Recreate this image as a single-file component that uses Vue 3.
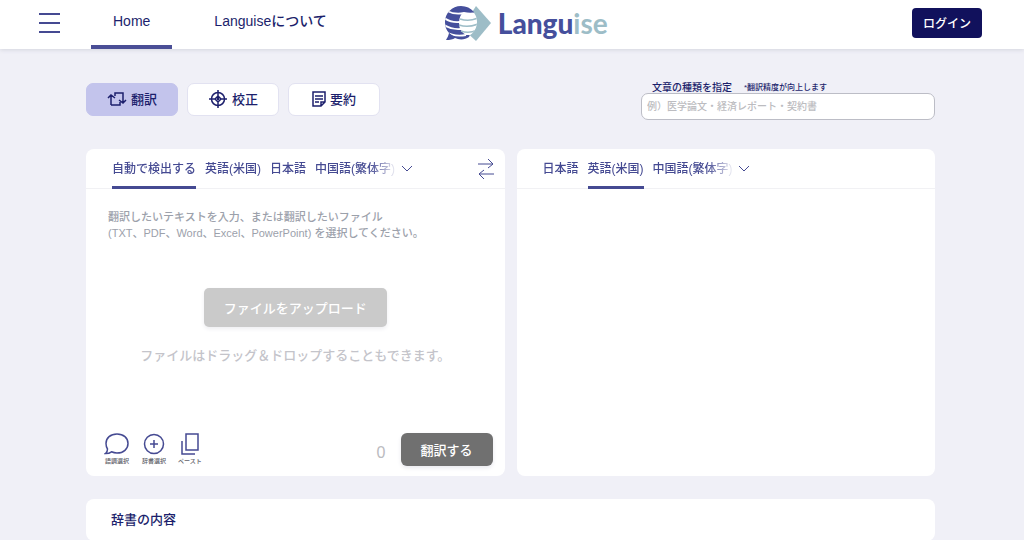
<script setup>
import { ref } from 'vue'

const modes = [
  { id: 'translate', label: '翻訳' },
  { id: 'proofread', label: '校正' },
  { id: 'summary', label: '要約' },
]
const mode = ref('translate')
const sourceLangs = ['自動で検出する', '英語(米国)', '日本語', '中国語(繁体字)']
const targetLangs = ['日本語', '英語(米国)', '中国語(繁体字)']
const source = ref('自動で検出する')
const target = ref('英語(米国)')
const text = ref('')
const genre = ref('')
</script>

<template>
  <div class="page">
    <header class="header">
      <button class="menu" type="button" aria-label="メニュー"><span></span><span></span><span></span></button>
      <nav class="nav">
        <a href="#" class="active">Home</a>
        <a href="#about">Languiseについて</a>
      </nav>
      <a class="logo" href="#" aria-label="Languise">
        <svg width="48" height="38" viewBox="0 0 48 38" aria-hidden="true">
          <defs>
            <clipPath id="globe"><circle cx="17" cy="18" r="16" /></clipPath>
          </defs>
          <path d="M32 2 47 19 32 37 18 24Z" fill="#9dbdc7" />
          <path d="M17 2C8 2 1 9 1 18c0 4 1 8 4 11-.5 3-2 5-3 7 4 0 7-.5 9-2 4 2 10 2 14-1L30 20V8Q25 2 17 2Z" fill="#454f9c" />
          <g clip-path="url(#globe)">
            <path d="M20 8q8 2 15-1v24H22q-7-4-7-12t5-11Z" fill="#fff" />
            <path d="M16 15q9 3 18-1M15 21q9 3 19-1M17 27q8 3 16-1" fill="none" stroke="#9dbdc7" stroke-width="1.500" />
            <path d="M3 7q8 4 17 2M0 14q7 5 16 4M0 21q8 5 17 4M2 28q8 5 20 3" fill="none" stroke="#fff" stroke-width="1.800" />
          </g>
        </svg>
        <span class="wordmark">Langu<span>ise</span></span>
      </a>
      <button class="login" type="button">ログイン</button>
    </header>

    <main class="main">
      <div class="toolbar">
        <div class="modes">
          <button v-for="m in modes" :key="m.id" type="button" :class="{ on: mode === m.id }" @click="mode = m.id">
            <svg v-if="m.id === 'translate'" width="20" height="16" viewBox="0 0 20 16"><path d="M4 14V4M1 7l3-3 4 3M4 14h9v-3M8 5V2h8v10M12 9l4 3 3-3" /></svg>
            <svg v-else-if="m.id === 'proofread'" width="20" height="20" viewBox="0 0 20 20"><circle cx="10" cy="10" r="6.500" /><path d="M10 1v6M10 13v6M1 10h6M13 10h6M10 7l3 3-3 3-3-3Z" /><circle cx="10" cy="10" r=".6" /></svg>
            <svg v-else width="14" height="16" viewBox="0 0 14 16"><path d="M1 1h12v10l-4 4H1ZM9 15v-4h4M3 5h8M3 8h8M3 11h4" /></svg>
            <span>{{ m.label }}</span>
          </button>
        </div>
        <div class="genre">
          <label for="genre">文章の種類を指定<small>*翻訳精度が向上します</small></label>
          <input id="genre" v-model="genre" type="text" placeholder="例）医学論文・経済レポート・契約書" />
        </div>
      </div>

      <div class="panels">
        <section class="panel">
          <div class="langs">
            <div class="tabs">
              <button v-for="l in sourceLangs" :key="l" type="button" :class="{ on: source === l }" @click="source = l">{{ l }}</button>
            </div>
            <button class="more" type="button" aria-label="他の言語"><svg width="12" height="8" viewBox="0 0 12 8"><path d="m1 1 5 5 5-5" /></svg></button>
            <button class="swap" type="button" aria-label="言語を入れ替える"><svg width="18" height="22" viewBox="0 0 18 22"><path d="M1 6h15M11 1l5 5M16 6l-5 4M17 16H2M7 12l-5 4M2 16l5 5" /></svg></button>
          </div>
          <textarea v-model="text" rows="2" aria-label="原文" placeholder="翻訳したいテキストを入力、または翻訳したいファイル&#10;(TXT、PDF、Word、Excel、PowerPoint) を選択してください。"></textarea>
          <div class="drop">
            <button type="button">ファイルをアップロード</button>
            <p>ファイルはドラッグ＆ドロップすることもできます。</p>
          </div>
          <div class="actions">
            <button class="tool" type="button">
              <svg width="26" height="24" viewBox="0 0 26 24"><path d="M13 2c6.500 0 11 4 11 9.500S19.500 21 13 21c-2 0-4-.5-5.500-1.200C6 21 4 21.500 1.500 21.500 3 20.500 3.500 19 3.500 17 2.500 15.500 2 13.500 2 11.500 2 6 6.500 2 13 2Z" /></svg>
              <span>語調選択</span>
            </button>
            <button class="tool" type="button">
              <svg width="24" height="24" viewBox="0 0 24 24"><circle cx="12" cy="12" r="9.500" /><path d="M12 8v8M8 12h8" /></svg>
              <span>辞書選択</span>
            </button>
            <button class="tool" type="button">
              <svg width="20" height="24" viewBox="0 0 20 24"><path d="M6 2h12v16H6ZM2 9v13h13" /></svg>
              <span>ペースト</span>
            </button>
            <output class="count">{{ text.length }}</output>
            <button class="submit" type="button">翻訳する</button>
          </div>
        </section>

        <section class="panel">
          <div class="langs target">
            <div class="tabs">
              <button v-for="l in targetLangs" :key="l" type="button" :class="{ on: target === l }" @click="target = l">{{ l }}</button>
            </div>
            <button class="more" type="button" aria-label="他の言語"><svg width="12" height="8" viewBox="0 0 12 8"><path d="m1 1 5 5 5-5" /></svg></button>
          </div>
        </section>
      </div>

      <section class="panel dictionary">
        <h2>辞書の内容</h2>
      </section>
    </main>
  </div>
</template>

<style>
body {
  background: #f0f0f7;
  overflow: hidden;
}
</style>

<style scoped>
.page {
  font-family: "Liberation Sans", "Noto Sans CJK JP", sans-serif;
  font-weight: 500;
  color: #1c1f6c;
}
.page * {
  box-sizing: border-box;
}
button,
input,
textarea {
  font: inherit;
  color: inherit;
  margin: 0;
  padding: 0;
  border: 0;
  background: none;
}
button {
  cursor: pointer;
  white-space: nowrap;
}
svg {
  display: block;
  flex: none;
}
button svg {
  fill: none;
  stroke: #454a92;
  stroke-width: 1.500;
}
.header {
  display: flex;
  align-items: center;
  height: 49px;
  padding: 0 42px 0 39px;
  background: #fff;
  box-shadow: 0 1px 4px #d4d5de;
}
.menu {
  display: flex;
  flex-direction: column;
  gap: 7px;
  width: 21px;
  margin: 0 31px 4px 0;
}
.menu span {
  height: 2px;
  background: #454a92;
}
.nav {
  display: flex;
  align-self: stretch;
  gap: 20px;
}
.nav a {
  padding: 0 22px;
  border-bottom: 4px solid transparent;
  font-size: 14px;
  line-height: 43px;
  color: #1c1f6c;
  text-decoration: none;
  white-space: nowrap;
}
.nav a.active {
  border-color: #4a4e96;
}
.logo {
  display: flex;
  align-items: center;
  gap: 6px;
  margin: 0 auto 4px 95px;
  text-decoration: none;
}
.wordmark {
  font-family: Lato, sans-serif;
  font-size: 28px;
  font-weight: 900;
  line-height: 36px;
  color: #454f9c;
}
.wordmark span {
  font-weight: 700;
  color: #9dbdc7;
}
.login {
  width: 70px;
  height: 30px;
  border-radius: 4px;
  margin-bottom: 4px;
  background: #11115c;
  color: #fff;
  font-size: 12px;
}
.main {
  padding: 30px 89px 0 86px;
}
.toolbar {
  display: flex;
  justify-content: space-between;
}
.modes {
  display: flex;
  gap: 9px;
  padding-top: 4px;
}
.modes button {
  display: flex;
  align-items: center;
  justify-content: center;
  gap: 4px;
  width: 92px;
  height: 33px;
  padding-bottom: 2px;
  border: 1px solid #e2e2f1;
  border-radius: 7px;
  background: #fff;
  font-size: 13px;
}
.modes button.on {
  background: #c3c4ec;
  border-color: #c3c4ec;
}
.modes svg {
  stroke: #1c1f6c;
}
.genre {
  width: 294px;
}
.genre label {
  display: flex;
  align-items: center;
  gap: 12px;
  height: 14px;
  padding-left: 11px;
  font-size: 10px;
}
.genre small {
  font-size: 8px;
}
.genre input {
  display: block;
  width: 100%;
  height: 27px;
  padding: 0 5px;
  border: 1px solid #bcbdc6;
  border-radius: 7px;
  background: #fff;
  font-size: 10px;
}
.genre input::placeholder {
  color: #bcbcc0;
}
.panels {
  display: grid;
  grid-template-columns: 1fr 1fr;
  gap: 12px;
  margin: 29px 0 23px;
}
.panel {
  display: flex;
  flex-direction: column;
  border-radius: 8px;
  background: #fff;
}
.langs {
  display: flex;
  align-items: center;
  height: 40px;
  padding: 0 10px 0 26px;
  border-bottom: 1px solid #f1f1f4;
}
.tabs {
  display: flex;
  gap: 9px;
  width: 286px;
  overflow: hidden;
  mask-image: linear-gradient(90deg, #000 calc(100% - 28px), transparent);
}
.target .tabs {
  width: 192px;
}
.tabs button {
  height: 40px;
  border-bottom: 3px solid transparent;
  font-size: 12px;
  color: #454a92;
}
.tabs button.on {
  border-color: #454a92;
}
.more {
  margin-left: 3px;
}
.more svg,
.swap svg {
  stroke-width: 1;
}
.swap {
  margin-left: auto;
}
textarea {
  display: block;
  margin: 20px 22px 0;
  resize: none;
  overflow: hidden;
  outline: 0;
  font-size: 11px;
  line-height: 16px;
}
textarea::placeholder {
  color: #9ca1ab;
}
.drop {
  display: flex;
  flex-direction: column;
  align-items: center;
  margin-top: 47px;
  font-size: 13px;
}
.drop button {
  width: 183px;
  height: 39px;
  border-radius: 5px;
  background: #cacaca;
  box-shadow: 0 2px 4px #eeeef2;
  color: #fff;
}
.drop p {
  margin: 19px 0 0;
  line-height: 20px;
  color: #c4c4ca;
}
.actions {
  display: flex;
  align-items: center;
  gap: 12px;
  margin-top: 66px;
  padding: 0 12px 10px 18px;
}
.tool {
  display: flex;
  flex-direction: column;
  align-items: center;
  font-size: 6px;
  line-height: 10px;
  color: #606068;
}
.count {
  margin-left: auto;
  padding: 7px 3px 0 0;
  font-size: 16px;
  color: #bbbbc0;
}
.submit {
  width: 92px;
  height: 33px;
  border-radius: 6px;
  background: #707070;
  box-shadow: 0 2px 4px #e8e8ee;
  color: #fff;
  font-size: 13px;
}
.dictionary {
  padding: 11px 25px;
}
.dictionary h2 {
  margin: 0;
  font-size: 13px;
  font-weight: 500;
  line-height: 20px;
}
</style>
